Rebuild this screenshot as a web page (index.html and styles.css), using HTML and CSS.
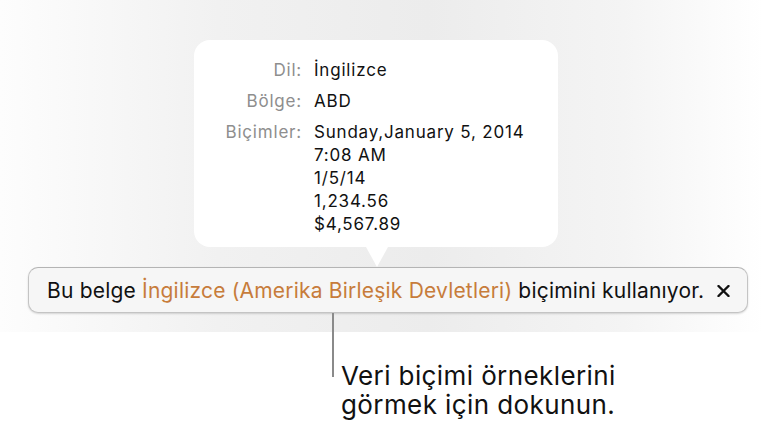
FILE: index.html
```html
<!DOCTYPE html>
<html lang="tr">
<head>
<meta charset="utf-8">
<link rel="stylesheet" href="styles.css">
</head>
<body>
<div class="popover">
  <div class="row"><span class="label">Dil:</span><span class="value">İngilizce</span></div>
  <div class="row"><span class="label">Bölge:</span><span class="value">ABD</span></div>
  <div class="row"><span class="label">Biçimler:</span><span class="value formats">Sunday,January 5, 2014<br>7:08 AM<br>1/5/14<br>1,234.56<br>$4,567.89</span></div>
</div>
<div class="bar">
  <span class="msg">Bu belge <span class="accent">İngilizce (Amerika Birleşik Devletleri)</span> biçimini kullanıyor.</span>
  <svg class="close" width="13" height="12" viewBox="0 0 13 12"><path d="M1.5 1 L11.5 11 M11.5 1 L1.5 11" stroke="#111" stroke-width="2.4" stroke-linecap="round"/></svg>
</div>
<div class="note">
  <div class="note-line"></div>
  <div class="note-text">Veri biçimi örneklerini<br>görmek için dokunun.</div>
</div>
</body>
</html>
```
FILE: styles.css
```css
html, body {
  margin: 0;
  padding: 0;
}
body {
  width: 779px;
  height: 434px;
  overflow: hidden;
  font-family: Inter, "Noto Sans", sans-serif;
  color: #111;
  background-color: #fff;
  background-image: linear-gradient(to right, #fdfdfd 0%, #f1f1f1 28%, #ececec 55%, #f4f4f4 80%, #ffffff 98%);
  background-size: 100% 332px;
  background-repeat: no-repeat;
  display: flex;
  flex-direction: column;
  align-items: flex-start;
}
.popover {
  position: relative;
  margin: 40px 0 0 194px;
  width: 364px;
  height: 207px;
  box-sizing: border-box;
  padding-top: 19px;
  background: #fff;
  border-radius: 16px;
}
.popover::after {
  content: "";
  position: absolute;
  left: 172px;
  bottom: -20px;
  width: 0;
  height: 0;
  border-left: 11px solid transparent;
  border-right: 11px solid transparent;
  border-top: 20px solid #fff;
}
.row {
  display: flex;
  font-size: 17px;
  line-height: 23px;
  letter-spacing: 0.8px;
  margin-bottom: 8px;
}
.label {
  width: 108px;
  text-align: right;
  color: #8e8e8e;
}
.value {
  margin-left: 12px;
  color: #111;
}
.bar {
  margin: 20px 0 0 28px;
  width: 720px;
  height: 46px;
  box-sizing: border-box;
  background: #f6f6f6;
  border: 1px solid #c4c4c4;
  border-top-color: #b4b4b4;
  border-radius: 10px;
  box-shadow: 0 1px 2px rgba(0,0,0,0.15);
  display: flex;
  align-items: center;
  padding-left: 18px;
}
.msg {
  font-size: 21px;
  letter-spacing: 0.2px;
  color: #111;
  white-space: nowrap;
}
.accent {
  color: #c77c3b;
}
.close {
  margin-left: 13px;
  margin-top: 1px;
}
.note {
  display: flex;
  align-items: flex-start;
  margin-left: 332px;
}
.note-line {
  width: 2px;
  height: 64px;
  background: #8a8a8a;
}
.note-text {
  margin: 48px 0 0 7px;
  font-size: 26px;
  line-height: 29px;
  letter-spacing: 0.4px;
  color: #111;
}
```
